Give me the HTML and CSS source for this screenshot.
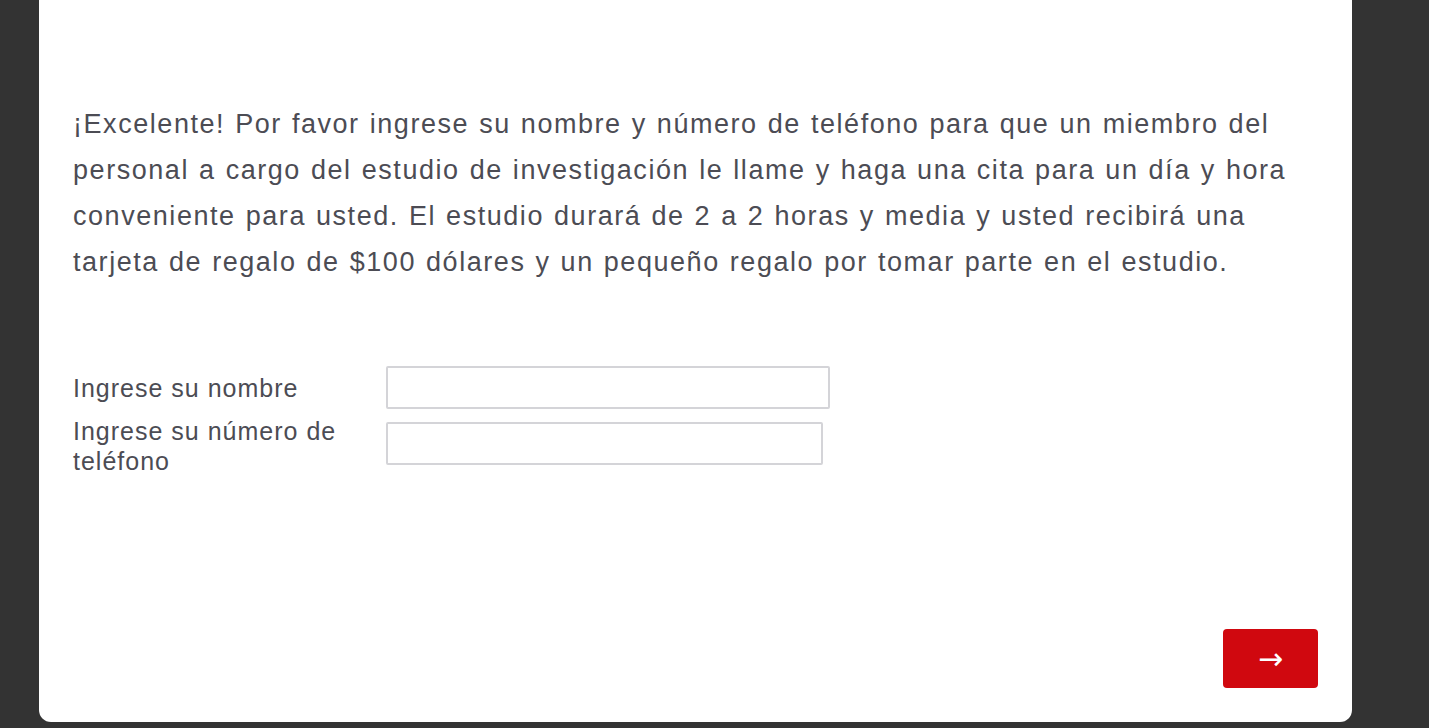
FILE: index.html
```html
<!DOCTYPE html>
<html>
  <head>
    <title>Estudio de investigación</title>
    <meta charset="UTF-8">
    <link rel="stylesheet" href="styles.css">
  </head>
  <body>
    <div id="page">
      <div id="card">
        <p class="intro">¡Excelente! Por favor ingrese su nombre y número de teléfono para que un miembro del personal a cargo del estudio de investigación le llame y haga una cita para un día y hora conveniente para usted. El estudio durará de 2 a 2 horas y media y usted recibirá una tarjeta de regalo de $100 dólares y un pequeño regalo por tomar parte en el estudio.</p>
        <div class="form">
          <div class="row">
            <label class="label" for="nombre">Ingrese su nombre</label>
            <input id="nombre" class="field wide" type="text">
          </div>
          <div class="row">
            <label class="label" for="telefono">Ingrese su número de teléfono</label>
            <input id="telefono" class="field" type="text">
          </div>
        </div>
        <div class="actions">
          <button type="button" class="next">&#8594;</button>
        </div>
      </div>
    </div>
  </body>
</html>
```

FILE: styles.css
```css
body
{
  margin: 0;
  background-color: #333333;
  font-family: "Liberation Sans", Arial, sans-serif;
  color: #4c4c54;
}
#page
{
  height: 728px;
  padding-left: 39px;
  box-sizing: border-box;
}
#card
{
  width: 1313px;
  height: 722px;
  background-color: #ffffff;
  border-radius: 0 0 12px 12px;
  box-sizing: border-box;
  padding: 101px 34px 34px 34px;
  display: flex;
  flex-direction: column;
}
.intro
{
  margin: 0;
  font-size: 27px;
  line-height: 46px;
  letter-spacing: 1.55px;
  word-spacing: 1px;
  width: 1222px;
}
.form
{
  margin-top: 81px;
  display: flex;
  flex-direction: column;
  gap: 13px;
}
.row
{
  display: flex;
  align-items: flex-start;
}
.label
{
  width: 290px;
  margin-right: 23px;
  font-size: 25px;
  letter-spacing: 1px;
  line-height: 30px;
  padding-top: 7px;
}
.row + .row .label {padding-top: 0; margin-top: -6px;}
.field
{
  width: 437px;
  height: 43px;
  box-sizing: border-box;
  border: 2px solid #d4d4d8;
  border-radius: 2px;
  padding: 0 10px;
  font-size: 20px;
  margin: 0;
}
.field.wide {width: 444px;}
.actions
{
  margin-top: auto;
  display: flex;
  justify-content: flex-end;
}
.next
{
  width: 95px;
  height: 59px;
  background-color: #d0080f;
  color: #ffffff;
  border: none;
  border-radius: 4px;
  font-size: 30px;
  font-family: "DejaVu Sans", sans-serif;
  margin: 0;
}
```
